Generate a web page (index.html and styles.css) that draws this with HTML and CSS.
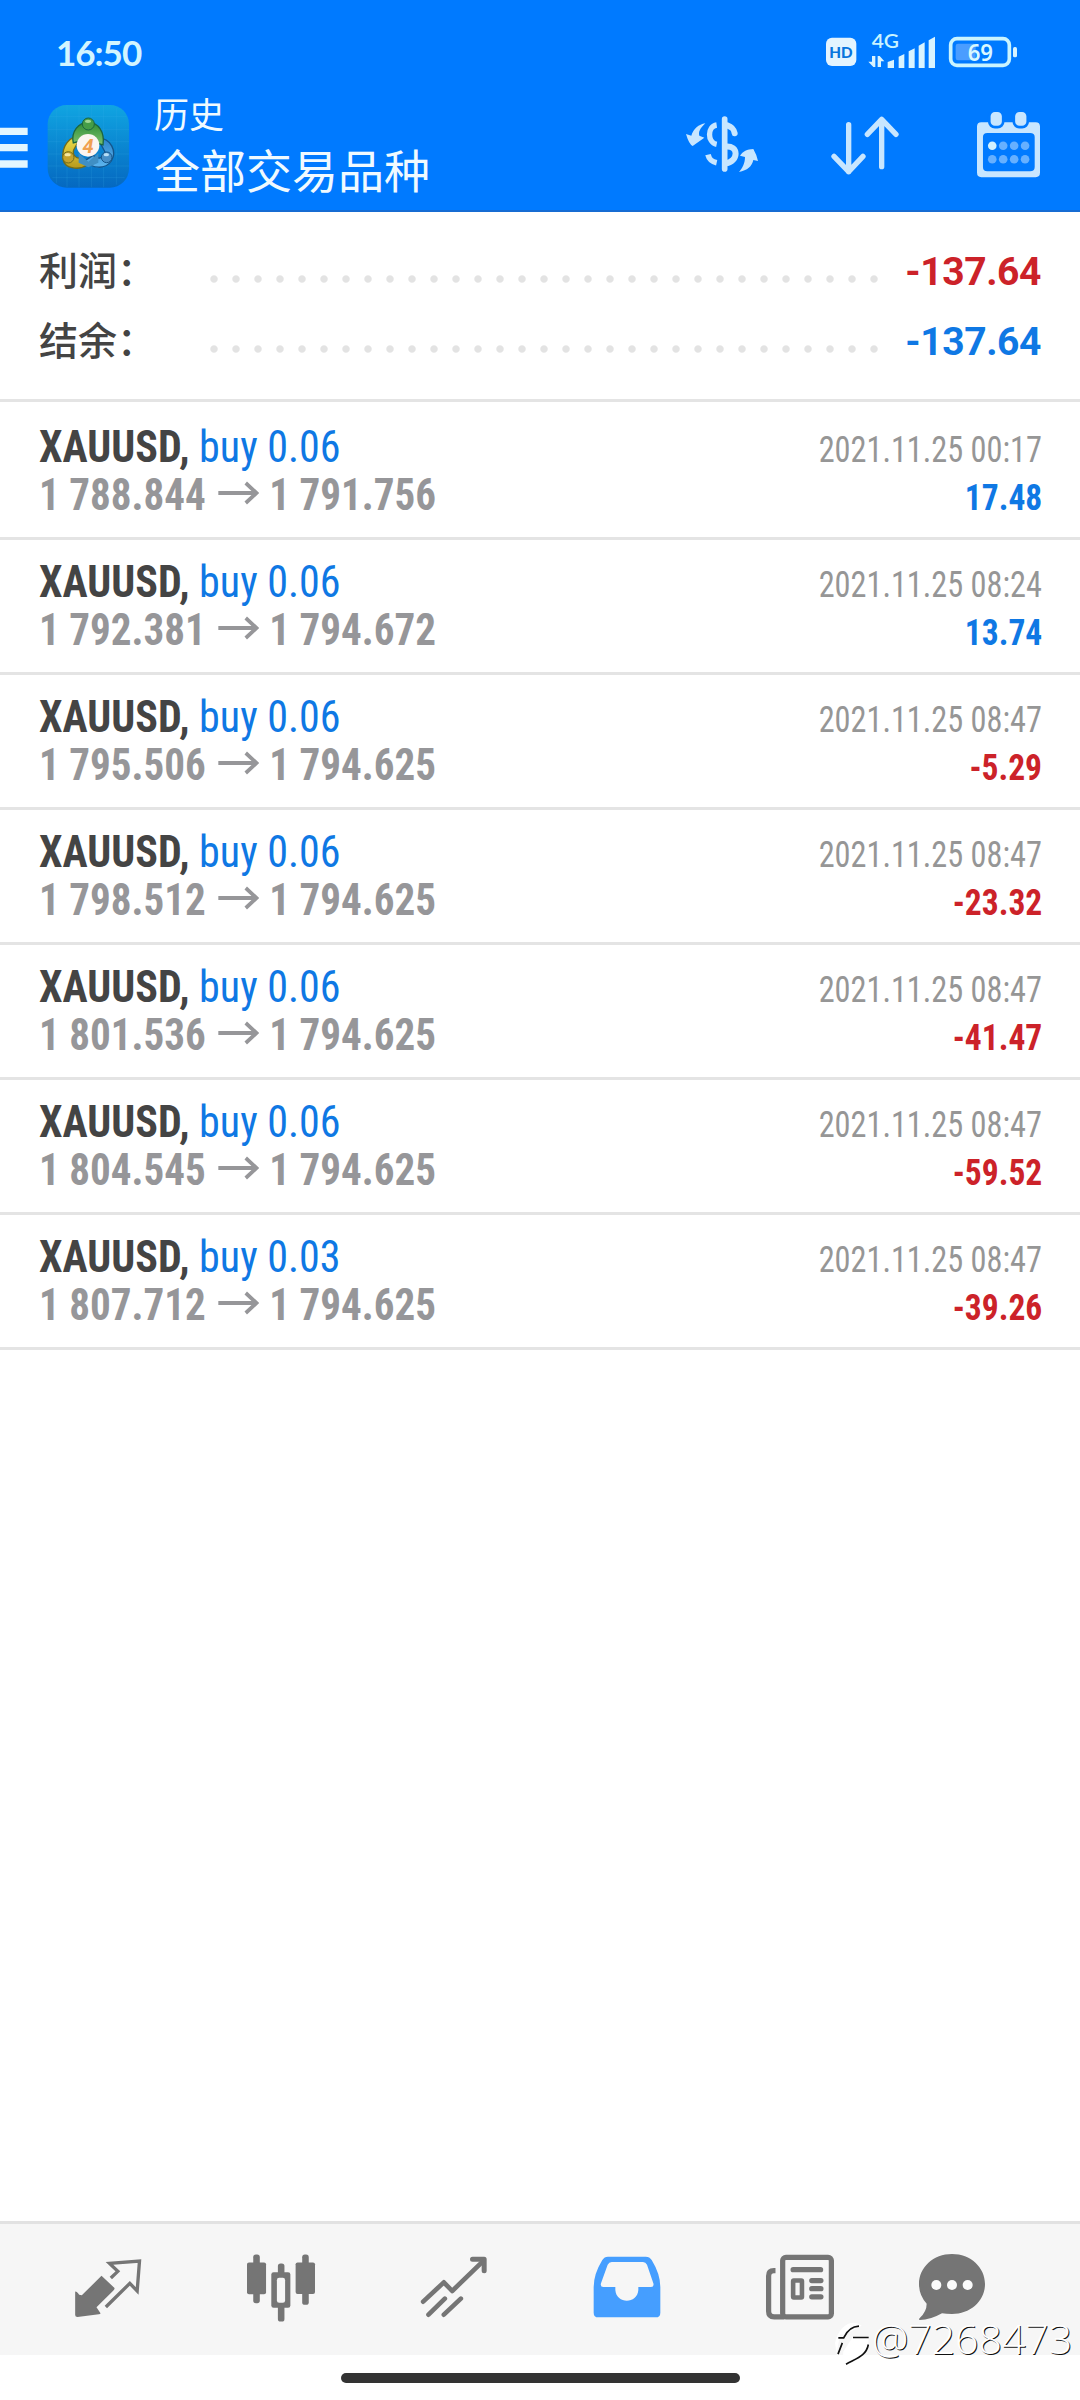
FILE: index.html
```html
<!DOCTYPE html>
<html lang="zh-CN">
<head>
<meta charset="utf-8">
<title>历史</title>
<link rel="stylesheet" href="styles.css">
</head>
<body>
<header class="header">
  <div class="status">
    <span class="time">16:50</span>
    <svg class="status-icons" viewBox="540 0 600 285">
      <rect x="558" y="113" width="91" height="85" rx="18" fill="#e3f4ff"/>
      <text x="603" y="173" class="hd" text-anchor="middle" textLength="70" lengthAdjust="spacingAndGlyphs">HD</text>
      <text x="695" y="143" class="net" textLength="82" lengthAdjust="spacingAndGlyphs">4G</text>
      <g fill="#d9f4ff">
        <path d="M696 168h10v33h-6l-15-16h11zM713 201v-33h6l14 16h-10v17z"/>
        <path d="M743 186l19-7v25h-19zM776 170l17-8v42h-17zM806 154l18-9v59h-18zM836 137l18-10v77h-18zM866 121l19-11v94h-19z"/>
      </g>
      <rect x="947" y="131" width="60" height="50" rx="7" fill="#4a9dff"/>
      <rect x="932" y="116" width="176" height="80" rx="19" fill="none" stroke="#c9f4ff" stroke-width="11"/>
      <rect x="1119" y="141" width="12" height="31" rx="5" fill="#d9f4ff"/>
      <text x="1021" y="182" class="battery" text-anchor="middle" textLength="76" lengthAdjust="spacingAndGlyphs">69</text>
    </svg>
  </div>
  <div class="appbar">
    <svg class="menu" viewBox="0 285 84 351"><path d="M0 394h83M0 443h83M0 492h83" stroke="#e2f6ff" stroke-width="22"/></svg>
    <svg class="logo" viewBox="141 285 249 351">
      <defs>
        <linearGradient id="bg" x2="0" y2="1"><stop stop-color="#10a5e2"/><stop offset="1" stop-color="#0568c0"/></linearGradient>
        <linearGradient id="gr" x2="0" y2="1"><stop stop-color="#2d8b35"/><stop offset="1" stop-color="#7dc36e"/></linearGradient>
        <linearGradient id="ye" x2="0" y2="1"><stop stop-color="#f1e04b"/><stop offset="1" stop-color="#b79a1c"/></linearGradient>
        <linearGradient id="bl" x2="0" y2="1"><stop stop-color="#2c83c9"/><stop offset="1" stop-color="#5db5ee"/></linearGradient>
      </defs>
      <rect x="143" y="315" width="244" height="248" rx="57" fill="url(#bg)"/>
      <path d="M169 328v222M201 316v246M237 316v246M274 316v246M311 316v246M349 324v230M150 350h230M143 388h244M143 425h244M143 462h244M143 498h244M157 533h217" stroke="#39b0e9" stroke-opacity=".28" stroke-width="2"/>
      <path d="M292 413C335 415 351 455 334 483C317 508 277 508 255 482L279 466C292 479 312 476 315 456Z" fill="url(#bl)" stroke="#14558b" stroke-width="4"/>
      <path d="M244 408C208 407 184 438 189 478C195 508 238 511 262 495L244 471C232 480 216 466 221 450Z" fill="url(#ye)" stroke="#716c1c" stroke-width="4"/>
      <path d="M220 429C212 395 236 367 265 367C295 367 315 396 309 435L279 426C283 401 246 401 244 422Z" fill="url(#gr)" stroke="#1b6540" stroke-width="4"/>
      <path d="M236 460l29 25 30-25v28l-30 14-29-14z" fill="#3f8fc4"/>
      <circle cx="265" cy="372" r="18" fill="#459d48" stroke="#1b6540" stroke-width="3"/><ellipse cx="264" cy="364" rx="9" ry="5" fill="#a2d793"/>
      <circle cx="205" cy="472" r="17" fill="#c4a32d" stroke="#716c1c" stroke-width="3"/><ellipse cx="203" cy="464" rx="9" ry="5" fill="#f4e7a1"/>
      <circle cx="320" cy="472" r="16" fill="#478fc7" stroke="#14558b" stroke-width="3"/><ellipse cx="319" cy="464" rx="8" ry="5" fill="#b7def6"/>
      <circle cx="264" cy="436" r="34" fill="#fbf5f0"/>
      <text x="264" y="458" class="four" text-anchor="middle">4</text>
    </svg>
    <div class="titles"><div class="sub">历史</div><div class="title">全部交易品种</div></div>
    <div class="actions">
      <svg class="act-dollar" viewBox="138 285 216 351">
        <g fill="none" stroke="#c8e6ff">
          <path d="M254 357V507" stroke-width="17" stroke-linecap="round"/>
          <path d="M230 375C202 379 201 427 230 433" stroke-width="16"/>
          <path d="M262 376C279 382 282 389 284 400" stroke-width="18" stroke-linecap="round"/>
          <path d="M204 464C208 480 216 485 230 488" stroke-width="17" stroke-linecap="butt"/>
          <path d="M254 440C299 433 296 486 256 490" stroke-width="18"/>
        </g>
        <path d="M196 370C179 386 175 397 178 407L193 413 158 438Q147 433 138 402L154 407C160 387 176 373 196 370zM297 516C307 505 315 490 315 471L300 467C309 454 321 448 340 447Q350 464 354 483L340 480C336 499 322 511 297 516z" fill="#c8e6ff"/>
      </svg>
      <svg class="act-sort" viewBox="573 285 204 351"><path d="M626 374V515M582 469L626 515 669 469M725 500V358M682 403L725 358 768 403" fill="none" stroke="#c8e6ff" stroke-width="16" stroke-linecap="round" stroke-linejoin="round"/></svg>
      <svg class="act-cal" viewBox="1010 285 190 351">
        <path fill-rule="evenodd" d="M1023 366H1187Q1200 366 1200 379V518Q1200 532 1187 532H1023Q1010 532 1010 518V379Q1010 366 1023 366zM1041 399Q1028 399 1028 411V501Q1028 514 1041 514H1170Q1184 514 1184 501V411Q1184 399 1170 399z" fill="#c8e6ff"/>
        <g fill="#c8e6ff" stroke="#007aff" stroke-width="8"><rect x="1047" y="331" width="42" height="50" rx="17"/><rect x="1121" y="331" width="42" height="50" rx="17"/></g>
        <g fill="#66b0ff"><circle cx="1089" cy="437" r="13"/><circle cx="1122" cy="437" r="13"/><circle cx="1155" cy="437" r="13"/><circle cx="1056" cy="478" r="13"/><circle cx="1089" cy="478" r="13"/><circle cx="1122" cy="478" r="13"/><circle cx="1155" cy="478" r="13"/></g>
        <circle cx="1056" cy="437" r="13" fill="#d3f2ff"/>
      </svg>
    </div>
  </div>
</header>
<section class="summary">
  <div class="sum-row"><span class="label">利润：</span><span class="dots"></span><span class="total loss">-137.64</span></div>
  <div class="sum-row"><span class="label">结余：</span><span class="dots"></span><span class="total gain">-137.64</span></div>
</section>
<main class="deals" id="deals"></main>
<nav class="tabs">
  <svg viewBox="225 72 201 393">
    <path d="M306 227L345 264Q346 268 341 272L291 322 303 340Q303 343 298 343L234 351Q227 351 227 345V275Q230 272 239 284L247 286 303 230z" fill="#757575"/>
    <path d="M334 234L355 214 330 190 420 183 413 273 391 250 319 321" fill="none" stroke="#757575" stroke-width="10"/>
  </svg>
  <svg viewBox="740 72 207 393">
    <g fill="#757575"><rect x="759" y="162" width="20" height="148" rx="8"/><rect x="740" y="186" width="58" height="97" rx="6"/><rect x="834" y="189" width="20" height="177" rx="8"/><rect x="814" y="216" width="58" height="108" rx="7"/><rect x="908" y="162" width="20" height="153" rx="8"/><rect x="888" y="186" width="59" height="96" rx="6"/></g>
    <rect x="831" y="233" width="25" height="76" rx="7" fill="#f6f6f6"/>
  </svg>
  <svg viewBox="184 72 197 393"><path d="M190 305L252 247 277 273 369 184M206 344L255 296M252 344L303 296" fill="none" stroke="#757575" stroke-width="14" stroke-linecap="round" stroke-linejoin="round"/><path d="M338 178H373V212" fill="none" stroke="#757575" stroke-width="15" stroke-linecap="round" stroke-linejoin="round"/></svg>
  <svg viewBox="702 72 200 393"><path fill-rule="evenodd" d="M745 170H858Q870 170 876 180Q902 222 902 261V338Q902 352 888 352H716Q702 352 702 338V261Q702 222 728 180Q734 170 745 170zM756 186Q748 186 744 194L724 250Q721 261 731 261H767V270C770 313 833 313 836 270V261H874Q884 261 881 250L862 194Q858 186 850 186z" fill="#459eff"/></svg>
  <svg viewBox="139 72 208 393"><g fill="none" stroke="#757575" stroke-width="16"><rect x="190" y="170" width="149" height="182" rx="10"/><path d="M168 211H163Q147 211 147 227V335Q147 352 164 352H195"/></g><path d="M222 208H306M279 241H307M279 266H307M279 291H307" stroke="#757575" stroke-width="16" stroke-linecap="round"/><rect x="222" y="241" width="27" height="52" rx="2" fill="none" stroke="#757575" stroke-width="14"/></svg>
  <svg class="tab-chat" viewBox="600 72 198 393"><path d="M699 162C755 162 798 202 798 252S755 342 699 342Q681 342 669 340Q634 360 602 360Q598 358 603 353Q623 334 623 311Q600 286 600 252C600 202 643 162 699 162z" fill="#757575"/><g fill="#fbfbfb"><circle cx="652" cy="255" r="15"/><circle cx="699" cy="255" r="15"/><circle cx="746" cy="255" r="15"/></g></svg>
</nav>
<footer class="home"><span class="pill"></span></footer>
<div class="watermark">
  <svg viewBox="345 370 105 125"><path d="M345 430C355 375 400 355 425 378L375 404H360L350 460zM398 412H446C446 455 425 472 378 492C390 468 365 485 370 455z" fill="#fff"/><path d="M355 414H371Q387 380 417 379M399 413H446M367 429L354 463M445 434C439 468 410 475 378 493" fill="none" stroke="#111" stroke-width="5"/></svg>
  <span>@7268473</span>
</div>
<script src="app.js"></script>
</body>
</html>
```
FILE: styles.css
```css
* { box-sizing: border-box; }
body { margin: 0; width: 1080px; height: 2400px; position: relative; overflow: hidden; display: flex; flex-direction: column; background: #fff; font-family: Roboto, "Noto Sans CJK SC", sans-serif; }
svg { display: block; flex: none; overflow: visible; }
.header { height: 212px; background: #007aff; border-bottom: 2px solid #176cd3; flex: none; }
.status { height: 95px; display: flex; justify-content: space-between; padding: 0 60px 0 56px; }
.time { font: 700 35px/40px Lato, sans-serif; letter-spacing: -1px; color: #d3f5ff; padding-top: 32px; }
.status-icons { width: 200px; height: 95px; }
.hd { font: 900 47px Lato, sans-serif; fill: #0874dc; }
.net { font: 600 60px Lato, sans-serif; fill: #c9f4ff; }
.battery { font: 600 69px "Noto Sans", sans-serif; fill: #d9f8ff; }
.four { font: italic 700 60px Roboto, sans-serif; fill: #f0a050; }
.appbar { height: 115px; display: flex; padding-right: 40px; }
.appbar svg { height: 117px; }
.menu { width: 28px; }
.logo { width: 83px; margin-left: 19px; }
.titles { margin: -2px 0 0 24px; color: #f0faff; font-family: "Noto Sans CJK SC", sans-serif; font-weight: 400; white-space: nowrap; }
.sub { font-size: 35px; line-height: 40px; }
.title { font-size: 46px; line-height: 56px; margin-top: 7px; }
.actions { margin-left: auto; display: flex; }
.act-dollar { width: 72px; }
.act-sort { width: 68px; margin-left: 73px; }
.act-cal { width: 63px; margin-left: 78px; }
.summary { height: 190px; padding: 24px 39px 0; border-bottom: 3px solid #e4e4e4; flex: none; }
.sum-row { height: 70px; display: flex; align-items: center; }
.label { width: 164px; font: 500 39px/70px "Noto Sans CJK SC", sans-serif; color: #444; white-space: nowrap; margin-top: -6px; }
.dots { width: 682px; height: 22px; margin-top: 15px; background: radial-gradient(circle, #e3e3e3 3.2px, transparent 4.2px) 0 0 / 22px 22px; }
.total { margin: 2px 0 0 auto; font-size: 39px; font-weight: 700; line-height: 70px; letter-spacing: -.4px; }
.loss { color: #cc2229; }
.gain { color: #0f78e4; }
.deals { flex: 1; }
.deal { height: 135px; padding: 18px 38px 0 39px; border-bottom: 3px solid #e4e4e4; font-stretch: 75%; }
.deal:first-child { height: 138px; padding-top: 21px; }
.line { height: 48px; line-height: 48px; display: flex; justify-content: space-between; align-items: baseline; white-space: nowrap; }
.symbol { font-size: 44px; font-weight: 700; color: #444; transform: scaleX(.955); transform-origin: left; }
.side { font-weight: 400; color: #0f78e4; }
.prices { font-size: 44px; font-weight: 700; color: #969699; display: flex; align-items: baseline; transform: scaleX(.934); transform-origin: left; }
.prices svg { width: 44px; height: 24px; margin: 10px 11px 0 13px; align-self: flex-start; }
.date { font-size: 36px; color: #969696; transform: scaleX(.897); transform-origin: right; }
.profit { font-size: 36px; font-weight: 700; transform: scaleX(.93); transform-origin: right; }
.tabs { height: 134px; background: #f6f6f6; border-top: 3px solid #e2e2e2; display: flex; flex: none; gap: 105px; padding-left: 74px; }
.tabs svg { height: 131px; width: 68px; }
.tabs .tab-chat { margin-left: -21px; }
.home { height: 45px; display: flex; justify-content: center; padding-top: 18px; flex: none; }
.pill { width: 399px; height: 10px; border-radius: 5px; background: #333; }
.watermark { position: absolute; left: 835px; top: 2314px; display: flex; align-items: flex-start; color: #fff; font: 300 41px/48px "Open Sans", sans-serif; text-shadow: 1px 1px 0 #111; }
.watermark svg { width: 35px; height: 42px; margin: 9px 2px 0 0; }
```
FILE: app.js
```js
const deals = [
  ['0.06', '1 788.844', '1 791.756', '2021.11.25 00:17', '17.48'],
  ['0.06', '1 792.381', '1 794.672', '2021.11.25 08:24', '13.74'],
  ['0.06', '1 795.506', '1 794.625', '2021.11.25 08:47', '-5.29'],
  ['0.06', '1 798.512', '1 794.625', '2021.11.25 08:47', '-23.32'],
  ['0.06', '1 801.536', '1 794.625', '2021.11.25 08:47', '-41.47'],
  ['0.06', '1 804.545', '1 794.625', '2021.11.25 08:47', '-59.52'],
  ['0.03', '1 807.712', '1 794.625', '2021.11.25 08:47', '-39.26'],
];
const arrow = '<svg viewBox="0 0 42 24" preserveAspectRatio="none"><path d="M0 12H39M28 2L39 12 28 22" fill="none" stroke="#969699" stroke-width="3.8"/></svg>';
document.getElementById('deals').innerHTML = deals.map(([vol, open, close, date, profit]) => `
  <article class="deal">
    <div class="line"><span class="symbol">XAUUSD, <span class="side">buy ${vol}</span></span><span class="date">${date}</span></div>
    <div class="line"><span class="prices"><span>${open}</span>${arrow}<span>${close}</span></span><span class="profit ${profit[0] === '-' ? 'loss' : 'gain'}">${profit}</span></div>
  </article>`).join('');
```
